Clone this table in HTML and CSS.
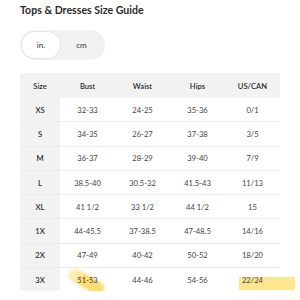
FILE: index.html
```html
<!DOCTYPE html>
<html>
<head>
<meta charset="utf-8">
<link rel="stylesheet" href="styles.css">
</head>
<body>
<div class="page">
  <h1 class="title">Tops &amp; Dresses Size Guide</h1>
  <div class="toggle">
    <span class="opt active">in.</span>
    <span class="opt">cm</span>
  </div>
  <table class="guide">
    <thead>
      <tr><th>Size</th><th>Bust</th><th>Waist</th><th>Hips</th><th>US/CAN</th></tr>
    </thead>
    <tbody>
      <tr><th>XS</th><td>32-33</td><td>24-25</td><td>35-36</td><td>0/1</td></tr>
      <tr><th>S</th><td>34-35</td><td>26-27</td><td>37-38</td><td>3/5</td></tr>
      <tr><th>M</th><td>36-37</td><td>28-29</td><td>39-40</td><td>7/9</td></tr>
      <tr><th>L</th><td>38.5-40</td><td>30.5-32</td><td>41.5-43</td><td>11/13</td></tr>
      <tr><th>XL</th><td>41 1/2</td><td>33 1/2</td><td>44 1/2</td><td>15</td></tr>
      <tr><th>1X</th><td>44-45.5</td><td>37-38.5</td><td>47-48.5</td><td>14/16</td></tr>
      <tr><th>2X</th><td>47-49</td><td>40-42</td><td>50-52</td><td>18/20</td></tr>
      <tr class="last"><th>3X</th><td class="mark-swipe"><span>51-53</span></td><td>44-46</td><td>54-56</td><td class="mark-box"><span>22/24</span></td></tr>
    </tbody>
  </table>
</div>
</body>
</html>
```
FILE: styles.css
```css
html, body {
  margin: 0;
  padding: 0;
  background: #ffffff;
}
.page {
  padding: 4px 20px 0 20px;
  font-family: "Lato", "Liberation Sans", sans-serif;
  color: #2b2b2b;
}
.title {
  margin: 0;
  font-size: 10.6px;
  font-weight: 700;
  line-height: 13px;
}
.toggle {
  margin-top: 13px;
  width: 85px;
  height: 30px;
  box-sizing: border-box;
  border-radius: 15px;
  background: #f1f1f1;
  display: flex;
  align-items: center;
  padding: 2px;
}
.opt {
  flex: 0 0 auto;
  width: 38px;
  height: 26px;
  border-radius: 13px;
  display: flex;
  align-items: center;
  justify-content: center;
  font-size: 8px;
  color: #333;
}
.opt + .opt {
  width: 43px;
}
.opt.active {
  background: #ffffff;
  box-shadow: 0 0 0 1px #e6e6e6;
}
.guide {
  margin-top: 13px;
  width: 260px;
  border-collapse: collapse;
  table-layout: fixed;
  font-size: 7.6px;
}
.guide th, .guide td {
  text-align: center;
  padding: 0;
  border-bottom: 1px solid #ececec;
  height: 23.3px;
}
.guide thead th {
  height: 25px;
  background: #f2f2f2;
  font-weight: 600;
  border-bottom: none;
}
.guide thead th:first-child { width: 40px; }
.guide tbody th {
  background: #f2f2f2;
  font-weight: 600;
}
.guide td {
  color: #444;
}
.guide tr.last th, .guide tr.last td {
  border-bottom: none;
}
.mark-swipe, .mark-box {
  position: relative;
}
.mark-swipe span, .mark-box span {
  position: relative;
  z-index: 1;
}
.mark-swipe::before {
  content: "";
  position: absolute;
  left: 6px;
  top: 7px;
  width: 40px;
  height: 13px;
  background: linear-gradient(90deg, rgba(253, 222, 110, 0.3), rgba(253, 216, 95, 0.9) 45%, rgba(253, 222, 110, 0.95));
  border-radius: 6px;
  transform: rotate(30deg);
  filter: blur(1.2px);
}
.mark-box::before {
  content: "";
  position: absolute;
  left: 14px;
  top: 9px;
  width: 56px;
  height: 13px;
  background: rgba(253, 226, 122, 0.85);
  filter: blur(0.5px);
}
```
